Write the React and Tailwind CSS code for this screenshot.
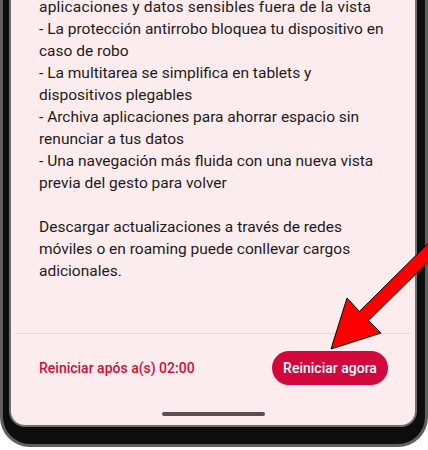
import React from "react";

const lines1 = [
  "aplicaciones y datos sensibles fuera de la vista",
  "- La protección antirrobo bloquea tu dispositivo en",
  "caso de robo",
  "- La multitarea se simplifica en tablets y",
  "dispositivos plegables",
  "- Archiva aplicaciones para ahorrar espacio sin",
  "renunciar a tus datos",
  "- Una navegación más fluida con una nueva vista",
  "previa del gesto para volver",
];
const lines2 = [
  "Descargar actualizaciones a través de redes",
  "móviles o en roaming puede conllevar cargos",
  "adicionales.",
];

function Arrow() {
  return (
    <svg
      className="absolute left-0 top-0 pointer-events-none"
      width="428"
      height="450"
      viewBox="0 0 428 450"
    >
      <polygon
        points="331,349 347,298 359.4,311.4 450,221.8 459.2,231 368.6,320.6 381,333"
        fill="#ff0000"
        stroke="#000"
        strokeWidth="1"
        strokeLinejoin="miter"
      />
    </svg>
  );
}

export default function App() {
  return (
    <div
      className="relative w-[428px] h-[450px] overflow-hidden bg-white"
      style={{ fontFamily: "Roboto, 'Noto Sans', sans-serif" }}
    >
      <div className="h-[447px] w-[428px] rounded-b-[30px] bg-[#0d0d0d] border-x-[3px] border-b-[3px] border-[#5f5f5f] pl-[8px] pr-[10px] pb-[19px] flex flex-col">
        <div className="flex-1 flex flex-col bg-[#fdeced] rounded-b-[14px] ring-2 ring-[#6e6e6e] overflow-hidden">
          <div className="pl-[28px] -mt-[4px] text-[15.5px] leading-[22px] text-[#1e1a1b]">
            {lines1.map((l, i) => (
              <div key={l} className={i === 0 ? "whitespace-nowrap tracking-[0.2px]" : "whitespace-nowrap"}>{l}</div>
            ))}
            <div className="h-[22px]" />
            {lines2.map((l) => (
              <div key={l} className="whitespace-nowrap">{l}</div>
            ))}
          </div>
          <div className="mt-[51px] mx-[4px] h-px bg-[#ecd6d8]" />
          <div className="flex items-center justify-between pl-[28px] pr-[27px] mt-[17px]">
            <span className="text-[14px] font-medium text-[#cf0f3a]">
              Reiniciar após a(s) 02:00
            </span>
            <button className="h-[34px] w-[116px] rounded-full bg-[#d2073c] text-white text-[14px] font-medium">
              Reiniciar agora
            </button>
          </div>
          <div className="flex justify-center mt-[27px]">
            <div className="h-[4px] w-[103px] rounded-full bg-[#5a4e50]" />
          </div>
        </div>
      </div>
      <Arrow />
    </div>
  );
}
